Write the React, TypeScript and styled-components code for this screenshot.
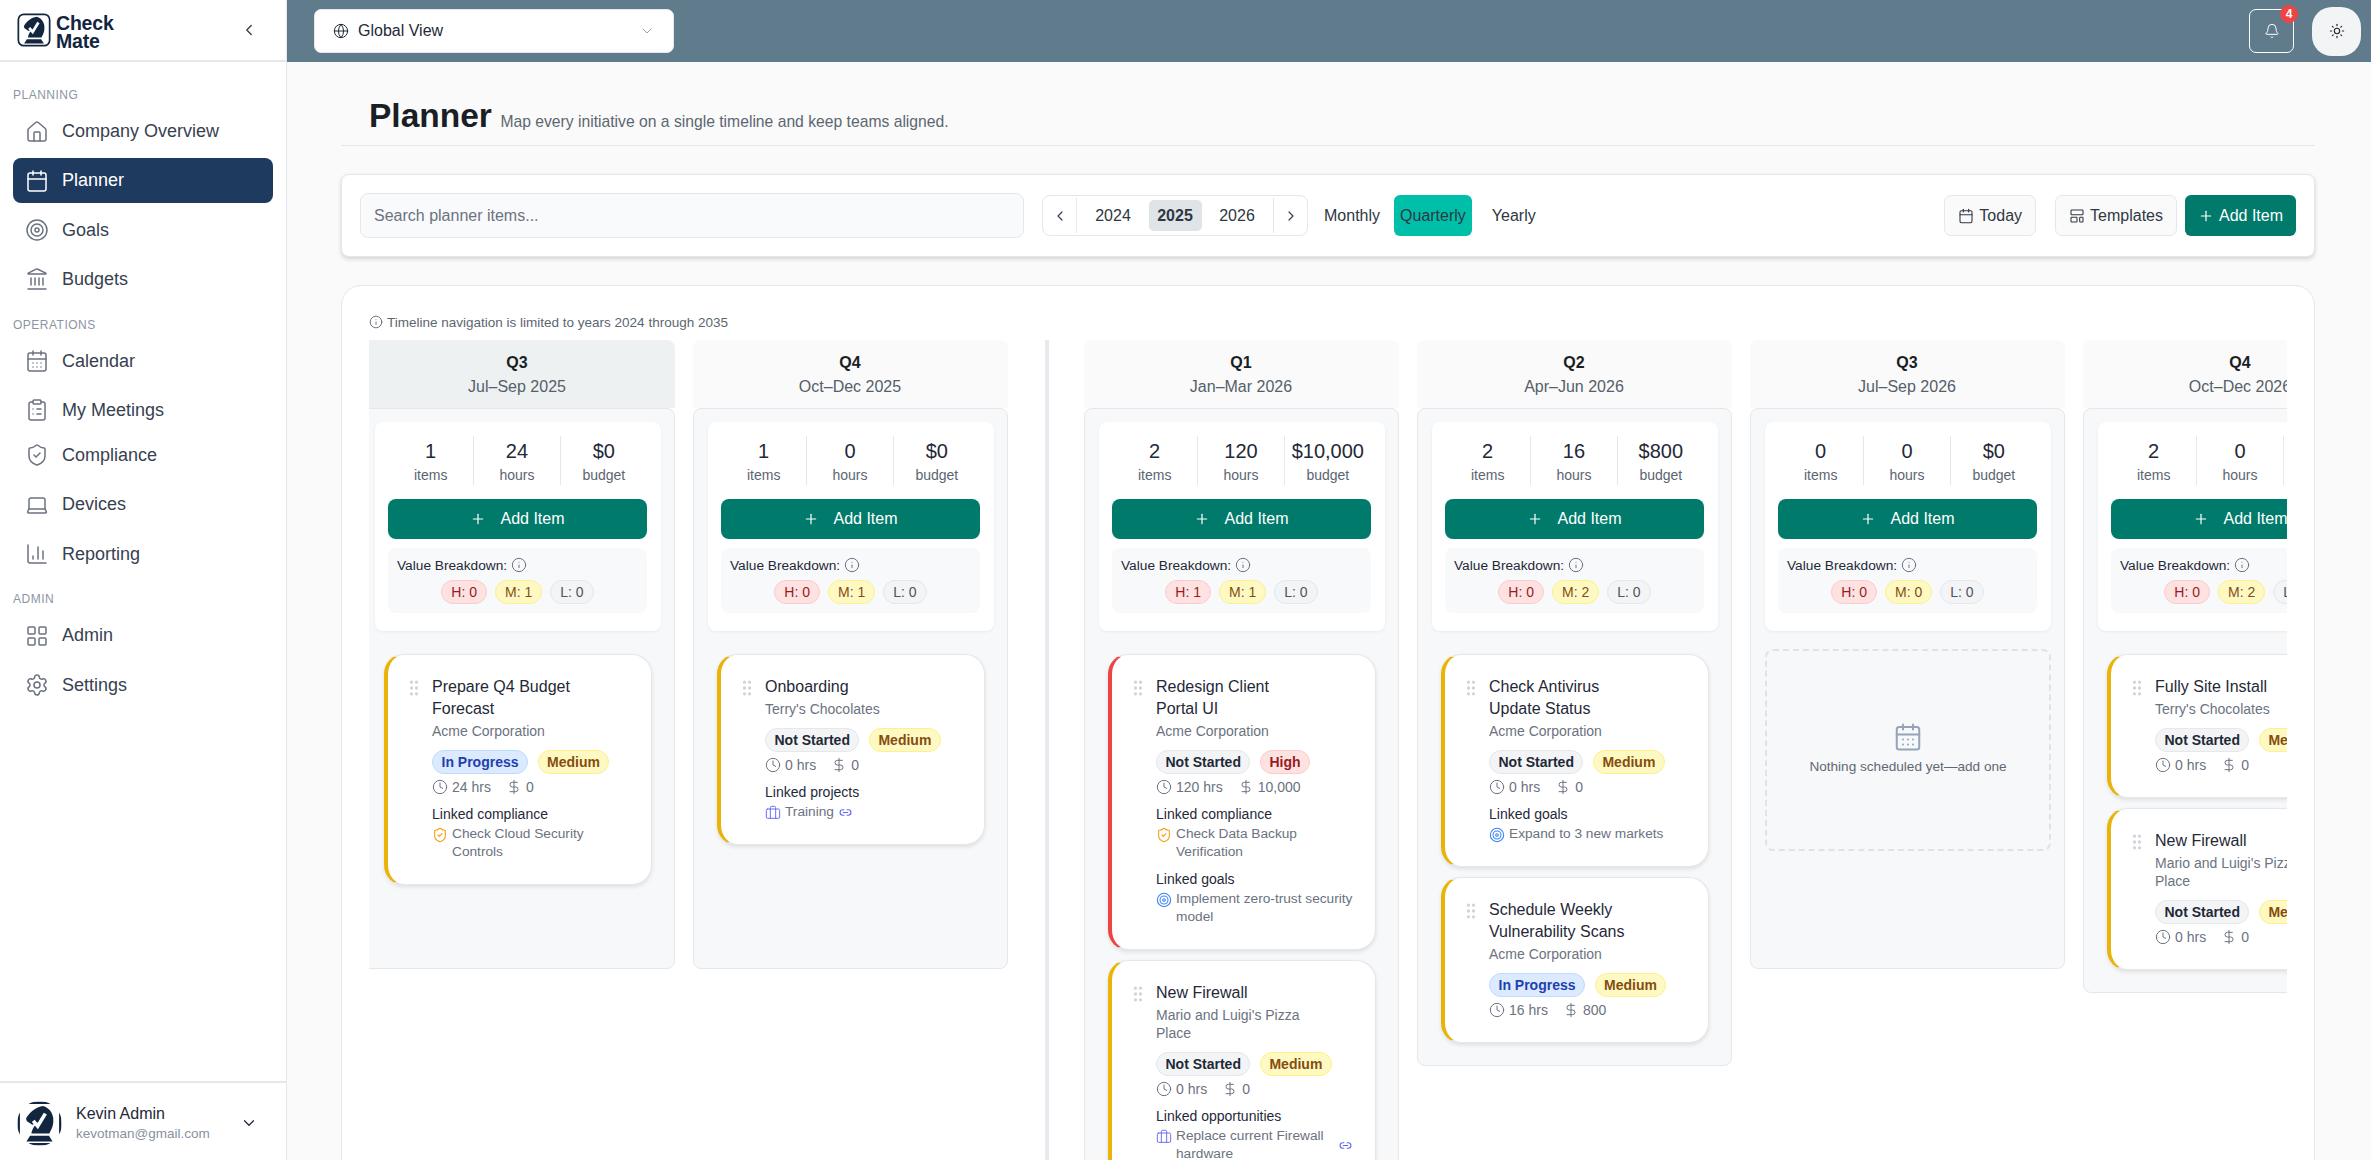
import React from 'react';
import styled, { createGlobalStyle } from 'styled-components';
import {
  House, Calendar, Target, Landmark, CalendarDays, ClipboardList, ShieldCheck, Laptop, ChartColumn,
  LayoutGrid, Settings, ChevronLeft, ChevronRight, ChevronDown, Globe, Bell, Sun, Info, Plus,
  LayoutTemplate, GripVertical, Clock, DollarSign, Link2, Briefcase,
} from 'lucide-react';

const Global = createGlobalStyle`
  html, body { margin: 0; padding: 0; height: 100%; overflow: hidden; background: #fafafa; }
  body, input, button { font-family: "Liberation Sans", Arial, sans-serif; }
  * { box-sizing: border-box; }
`;

const Shell = styled.div`display: flex; height: 100vh; overflow: hidden;`;
const Sidebar = styled.aside`flex: 0 0 287px; display: flex; flex-direction: column; background: #fff; border-right: 1px solid #e5e7eb;`;
const LogoBar = styled.div`height: 62px; flex: none; display: flex; align-items: center; justify-content: space-between; padding: 0 28px 0 17px; border-bottom: 2px solid #e5e7eb;`;
const LogoWrap = styled.div`display: flex; align-items: center; gap: 5px;`;
const LogoText = styled.div`font-size: 19.5px; line-height: 17.5px; font-weight: 700; color: #12263f; letter-spacing: -0.2px; padding-top: 5px;`;
const Nav = styled.nav`flex: 1; padding: 0 13px; display: flex; flex-direction: column; overflow: hidden;`;
const SectionLabel = styled.div<{ $first?: boolean }>`
  height: 16px; line-height: 16px; margin: ${(p) => (p.$first ? '25px' : '10.5px')} 0 6px; font-size: 12px;
  letter-spacing: 0.5px; color: #8b95a5; text-transform: uppercase;
`;
const NavItem = styled.a<{ $active?: boolean; $flush?: boolean }>`
  flex: none; height: 45px; display: flex; align-items: center; gap: 13px; padding: 0 12px; border-radius: 8px;
  margin-bottom: ${(p) => (p.$flush ? '0' : '4.3px')}; font-size: 18px; color: ${(p) => (p.$active ? '#fff' : '#374151')};
  background: ${(p) => (p.$active ? '#1f3a5f' : 'transparent')};
  svg { color: ${(p) => (p.$active ? '#fff' : '#6b7280')}; }
`;
const UserBar = styled.div`height: 79px; flex: none; border-top: 2px solid #e5e7eb; display: flex; align-items: center; padding: 3px 28px 0 17px;`;
const Avatar = styled.div`width: 45px; height: 45px; border-radius: 50%; overflow: hidden; flex: none;`;
const UserText = styled.div`margin-left: 14px; flex: 1;`;
const UserName = styled.div`font-size: 16px; line-height: 20px; color: #1f2937;`;
const UserMail = styled.div`font-size: 13.5px; line-height: 19px; color: #8891a0;`;

const Right = styled.div`flex: 1; min-width: 0; display: flex; flex-direction: column;`;
const Header = styled.header`height: 62px; flex: none; background: #607b8b; display: flex; align-items: center; padding: 0 10px 0 27px;`;
const Select = styled.div`width: 360px; height: 44px; background: #fff; border-radius: 7px; border: 1px solid #e5e7eb; display: flex; align-items: center; padding: 0 18px; font-size: 16px; color: #1f2937;
  span { margin-left: 9px; flex: 1; }
`;
const HeaderSpacer = styled.div`flex: 1;`;
const BellButton = styled.div`position: relative; width: 45px; height: 44px; border: 1px solid #fff; border-radius: 7px; display: flex; align-items: center; justify-content: center; color: #fff;`;
const Badge = styled.span`position: absolute; top: -5px; right: -5px; width: 18px; height: 18px; border-radius: 50%; background: #ef4444; color: #fff; font-size: 12px; font-weight: 700; display: flex; align-items: center; justify-content: center;`;
const ThemeButton = styled.div`margin-left: 18px; width: 49px; height: 49px; border-radius: 20px; background: #f3f4f6; color: #1f2937; display: flex; align-items: center; justify-content: center;`;

const Main = styled.main`flex: 1; min-height: 0; overflow: hidden; background: #fafafa; padding: 33px 56px 0 54px;`;
const TitleRow = styled.div`display: flex; align-items: baseline; gap: 8.5px; padding: 0 0 9px 28px; border-bottom: 1px solid #e5e7eb; height: 51px; margin-bottom: 28px;`;
const Title = styled.h1`margin: 0; font-size: 33.5px; line-height: 41px; font-weight: 700; color: #1a1f26;`;
const Subtitle = styled.span`font-size: 15.7px; color: #5d6670;`;

const Toolbar = styled.div`height: 83px; background: #fff; border: 1px solid #e5e7eb; border-radius: 8px; box-shadow: 0 2px 4px rgba(0,0,0,.16); display: flex; align-items: center; padding: 0 18px; margin-bottom: 28px;`;
const Search = styled.input`width: 664px; height: 45px; background: #f9fafb; border: 1px solid #e5e7eb; border-radius: 8px; padding: 0 13px; font-size: 16px; color: #1f2937; outline: none;
  &::placeholder { color: #6b7280; opacity: 1; }
`;
const YearGroup = styled.div`margin-left: 18px; width: 266px; height: 41px; border: 1px solid #e5e7eb; border-radius: 8px; display: flex; align-items: center; background: #fff;`;
const ArrowButton = styled.div<{ $side: 'left' | 'right' }>`
  flex: none; width: 34px; height: 35px; display: flex; align-items: center; justify-content: center; color: #374151;
  border-${(p) => (p.$side === 'left' ? 'right' : 'left')}: 1px solid #e5e7eb;
`;
const Years = styled.div`flex: 1; display: flex; justify-content: center; gap: 9px;`;
const Year = styled.div<{ $active?: boolean }>`
  width: 53px; height: 31px; display: flex; align-items: center; justify-content: center; border-radius: 5px; font-size: 16px; color: #2f3742;
  font-weight: ${(p) => (p.$active ? 700 : 400)}; background: ${(p) => (p.$active ? '#dfe4e7' : 'transparent')};
`;
const Toggle = styled.div`margin-left: 10px; display: flex; gap: 8px; align-items: center;`;
const ToggleButton = styled.div<{ $active?: boolean }>`
  height: 41px; padding: 0 6px; display: flex; align-items: center; border-radius: 6px; font-size: 16px; color: #2f3742;
  background: ${(p) => (p.$active ? '#00bfa9' : 'transparent')};
  &:last-child { margin-left: 6px; }
`;
const ToolSpacer = styled.div`flex: 1;`;
const GhostButton = styled.div<{ $gap?: number }>`
  height: 41px; padding: 0 13px; display: flex; align-items: center; gap: 5px; border: 1px solid #e5e7eb; border-radius: 7px; background: #fafafa; font-size: 16px; color: #2f3742;
  margin-right: ${(p) => p.$gap ?? 0}px;
`;
const PrimaryButton = styled.div`height: 41px; padding: 0 13px; display: flex; align-items: center; gap: 5px; border-radius: 6px; background: #007a6b; color: #fff; font-size: 16px;`;

const TimelineCard = styled.section`height: 1000px; background: #fff; border: 1px solid #e5e7eb; border-radius: 20px; padding: 27px 27px 0;`;
const Note = styled.div`height: 18px; display: flex; align-items: center; gap: 4px; font-size: 13.5px; color: #5c6670; margin-bottom: 9px;`;
const Scroller = styled.div`overflow: hidden; height: 900px;`;
const Track = styled.div`display: flex; align-items: flex-start; gap: 18px; margin-left: -9px; width: max-content; min-height: 900px;`;
const YearDivider = styled.div`align-self: stretch; flex: 0 0 4px; background: #e8e8ee; margin: 0 17px 0 19px;`;
const Column = styled.div`flex: 0 0 315px;`;
const ColumnHead = styled.div<{ $current?: boolean }>`
  height: 68px; border-radius: 8px 8px 0 0; background: ${(p) => (p.$current ? '#eef1f2' : '#fafafa')}; text-align: center; padding: 13px 1px 0 0;
`;
const Quarter = styled.div`font-size: 16px; line-height: 20px; font-weight: 700; color: #1a1f26;`;
const Dates = styled.div`margin-top: 4px; font-size: 16px; line-height: 20px; color: #555f6a;`;
const ColumnBody = styled.div`min-height: 561px; background: #f7f8fa; border: 1px solid #e5e7eb; border-radius: 8px; padding: 13px 13px 22px 14px;`;
const Summary = styled.div`background: #fff; border-radius: 8px; box-shadow: 0 1px 3px rgba(0,0,0,.06); padding: 14px 14px 18px 13px; margin-bottom: 23px;`;
const Stats = styled.div`display: grid; grid-template-columns: repeat(3, 1fr); height: 49px; margin-bottom: 14px;`;
const Stat = styled.div`text-align: center; border-right: 1px solid #e5e7eb; &:last-child { border-right: 0; }`;
const StatValue = styled.div`font-size: 20px; line-height: 30px; color: #1f2937; white-space: nowrap;`;
const StatLabel = styled.div`font-size: 14px; line-height: 19px; color: #5b6570;`;
const AddWide = styled.div`height: 40px; border-radius: 8px; background: #007a6b; color: #fff; font-size: 16px; display: flex; align-items: center; justify-content: center; gap: 14px;`;
const ValueBox = styled.div`margin-top: 9px; height: 65px; border-radius: 8px; background: #f8f9fb; padding: 9px;`;
const ValueTitle = styled.div`height: 16px; display: flex; align-items: center; gap: 4px; font-size: 13.7px; color: #1f2937; svg { color: #6b7280; }`;
const ValuePills = styled.div`margin-top: 7px; display: flex; justify-content: center; gap: 8px;`;

const pill = {
  high: 'background:#fee2e2;border-color:#fecaca;color:#991b1b;',
  med: 'background:#fef9c3;border-color:#fef08a;color:#854d0e;',
  low: 'background:#f3f4f6;border-color:#e5e7eb;color:#4b5563;',
  prog: 'background:#dbeafe;border-color:#bfdbfe;color:#1e40af;',
  none: 'background:#f3f4f6;border-color:#e5e7eb;color:#1f2937;',
};
type Tone = keyof typeof pill;
const CountPill = styled.span<{ $tone: Tone }>`
  height: 24px; padding: 0 9px; border: 1px solid; border-radius: 12px; font-size: 14px; line-height: 22px; ${(p) => pill[p.$tone]}
`;

const ItemCard = styled.article<{ $accent: string }>`
  width: 268px; margin: 0 0 10px 9px; display: flex; gap: 8px; background: #fff; border: 1px solid #e5e7eb; border-left: 4px solid ${(p) => p.$accent};
  border-radius: 20px; box-shadow: 0 2px 4px rgba(0,0,0,.1); padding: 21px 15px 23px 16px;
  &:last-child { margin-bottom: 0; }
`;
const Grip = styled.div`flex: none; width: 20px; height: 20px; margin-top: 2px; color: #d1d5db;`;
const ItemContent = styled.div`flex: none; width: 202px;`;
const ItemTitle = styled.div`max-width: 150px; font-size: 16px; line-height: 22px; color: #1f2937;`;
const ItemClient = styled.div`max-width: 150px; margin-top: 2px; font-size: 14px; line-height: 18px; color: #6b7280;`;
const Pills = styled.div`margin-top: 10px; display: flex; gap: 9.5px; white-space: nowrap;`;
const StatusPill = styled.span<{ $tone: Tone }>`
  height: 24px; padding: 0 8.5px; border: 1px solid; border-radius: 12px; font-size: 14px; line-height: 22px; font-weight: 700; ${(p) => pill[p.$tone]}
`;
const Meta = styled.div`margin-top: 4px; height: 18px; display: flex; align-items: center; gap: 4px; font-size: 14px; color: #6b7280; white-space: nowrap;
  svg:nth-of-type(2) { margin-left: 11px; }
`;
const LinkHead = styled.div`margin-top: 9px; font-size: 14px; line-height: 18px; color: #1f2937;`;
const LinkRow = styled.div`margin-top: 2px; display: flex; align-items: flex-start; gap: 4px; font-size: 13.7px; line-height: 18px; color: #6b7280;
  > svg:first-child { flex: none; margin-top: 2px; }
`;
const LinkText = styled.span`flex: 0 1 auto;`;
const LinkEnd = styled.span`flex: none; align-self: center; margin: 0 6px 0 1px; display: flex; color: #6366f1;`;
const Empty = styled.div`margin: -5px 0 0; height: 202px; border: 2px dashed #dfe3e8; border-radius: 8px; display: flex; flex-direction: column; align-items: center; justify-content: center; color: #94a3b8; gap: 6px; padding-bottom: 2px;`;
const EmptyText = styled.div`font-size: 13.6px; line-height: 18px; color: #5f6872;`;

const LogoMark = ({ size = 34 }: { size?: number }) => (
  <svg width={size} height={size} viewBox="0 0 100 100" fill="none" aria-hidden>
    <rect x="4" y="4" width="92" height="92" rx="16" stroke="#12263f" strokeWidth="5" fill="#fff" />
    <path d="M58 11C74 15 84 32 80 52 78 62 74 67 72 72H32C34 60 40 54 46 47L34 53 22 45 20 39C28 25 42 13 58 11Z" fill="#12263f" />
    <path d="M29 77H71L79 90H21Z" fill="#12263f" />
    <path d="M36 44 46 56 63 28" stroke="#fff" strokeWidth="8" fill="none" />
  </svg>
);

type Link = { icon: 'shield' | 'target' | 'case'; text: string; chain?: boolean };
type Item = {
  title: string; client: string; accent: string; status: 'Not Started' | 'In Progress'; priority: 'Medium' | 'High';
  hrs: number; cost: string; sections?: { head: string; links: Link[] }[];
};
type Col = {
  q: string; dates: string; current?: boolean; items: string; hours: string; budget: string; h: number; m: number; l: number;
  cards?: Item[]; empty?: boolean;
};
const YEL = '#eab308';
const RED = '#ef4444';
const firewall = (): Item => ({ title: 'New Firewall', client: "Mario and Luigi's Pizza Place", accent: YEL, status: 'Not Started', priority: 'Medium', hrs: 0, cost: '0' });

const before: Col[] = [
  { q: 'Q3', dates: 'Jul–Sep 2025', current: true, items: '1', hours: '24', budget: '$0', h: 0, m: 1, l: 0, cards: [
    { title: 'Prepare Q4 Budget Forecast', client: 'Acme Corporation', accent: YEL, status: 'In Progress', priority: 'Medium', hrs: 24, cost: '0',
      sections: [{ head: 'Linked compliance', links: [{ icon: 'shield', text: 'Check Cloud Security Controls' }] }] },
  ] },
  { q: 'Q4', dates: 'Oct–Dec 2025', items: '1', hours: '0', budget: '$0', h: 0, m: 1, l: 0, cards: [
    { title: 'Onboarding', client: "Terry's Chocolates", accent: YEL, status: 'Not Started', priority: 'Medium', hrs: 0, cost: '0',
      sections: [{ head: 'Linked projects', links: [{ icon: 'case', text: 'Training', chain: true }] }] },
  ] },
];
const after: Col[] = [
  { q: 'Q1', dates: 'Jan–Mar 2026', items: '2', hours: '120', budget: '$10,000', h: 1, m: 1, l: 0, cards: [
    { title: 'Redesign Client Portal UI', client: 'Acme Corporation', accent: RED, status: 'Not Started', priority: 'High', hrs: 120, cost: '10,000',
      sections: [
        { head: 'Linked compliance', links: [{ icon: 'shield', text: 'Check Data Backup Verification' }] },
        { head: 'Linked goals', links: [{ icon: 'target', text: 'Implement zero-trust security model' }] },
      ] },
    { ...firewall(), sections: [{ head: 'Linked opportunities', links: [{ icon: 'case', text: 'Replace current Firewall hardware', chain: true }] }] },
  ] },
  { q: 'Q2', dates: 'Apr–Jun 2026', items: '2', hours: '16', budget: '$800', h: 0, m: 2, l: 0, cards: [
    { title: 'Check Antivirus Update Status', client: 'Acme Corporation', accent: YEL, status: 'Not Started', priority: 'Medium', hrs: 0, cost: '0',
      sections: [{ head: 'Linked goals', links: [{ icon: 'target', text: 'Expand to 3 new markets' }] }] },
    { title: 'Schedule Weekly Vulnerability Scans', client: 'Acme Corporation', accent: YEL, status: 'In Progress', priority: 'Medium', hrs: 16, cost: '800' },
  ] },
  { q: 'Q3', dates: 'Jul–Sep 2026', items: '0', hours: '0', budget: '$0', h: 0, m: 0, l: 0, empty: true },
  { q: 'Q4', dates: 'Oct–Dec 2026', items: '2', hours: '0', budget: '$0', h: 0, m: 2, l: 0, cards: [
    { title: 'Fully Site Install', client: "Terry's Chocolates", accent: YEL, status: 'Not Started', priority: 'Medium', hrs: 0, cost: '0' },
    firewall(),
  ] },
];

const LinkIcon = ({ kind }: { kind: Link['icon'] }) => {
  if (kind === 'shield') return <ShieldCheck size={16} color="#f59e0b" strokeWidth={1.6} />;
  if (kind === 'target') return <Target size={16} color="#3b82f6" strokeWidth={1.6} />;
  return <Briefcase size={16} color="#6366f1" strokeWidth={1.4} />;
};

const Card = ({ item }: { item: Item }) => (
  <ItemCard $accent={item.accent}>
    <Grip><GripVertical size={20} strokeWidth={2} /></Grip>
    <ItemContent>
      <ItemTitle>{item.title}</ItemTitle>
      <ItemClient>{item.client}</ItemClient>
      <Pills>
        <StatusPill $tone={item.status === 'In Progress' ? 'prog' : 'none'}>{item.status}</StatusPill>
        <StatusPill $tone={item.priority === 'High' ? 'high' : 'med'}>{item.priority}</StatusPill>
      </Pills>
      <Meta>
        <Clock size={16} strokeWidth={1.5} />
        <span>{item.hrs} hrs</span>
        <DollarSign size={16} strokeWidth={1.5} />
        <span>{item.cost}</span>
      </Meta>
      {item.sections?.map((s) => (
        <React.Fragment key={s.head}>
          <LinkHead>{s.head}</LinkHead>
          {s.links.map((l) => (
            <LinkRow key={l.text}>
              <LinkIcon kind={l.icon} />
              <LinkText>{l.text}</LinkText>
              {l.chain && <LinkEnd><Link2 size={13} strokeWidth={2} /></LinkEnd>}
            </LinkRow>
          ))}
        </React.Fragment>
      ))}
    </ItemContent>
  </ItemCard>
);

const QuarterColumn = ({ col }: { col: Col }) => (
  <Column>
    <ColumnHead $current={col.current}>
      <Quarter>{col.q}</Quarter>
      <Dates>{col.dates}</Dates>
    </ColumnHead>
    <ColumnBody>
      <Summary>
        <Stats>
          <Stat><StatValue>{col.items}</StatValue><StatLabel>items</StatLabel></Stat>
          <Stat><StatValue>{col.hours}</StatValue><StatLabel>hours</StatLabel></Stat>
          <Stat><StatValue>{col.budget}</StatValue><StatLabel>budget</StatLabel></Stat>
        </Stats>
        <AddWide><Plus size={16} strokeWidth={1.8} />Add Item</AddWide>
        <ValueBox>
          <ValueTitle>Value Breakdown:<Info size={16} strokeWidth={1.5} /></ValueTitle>
          <ValuePills>
            <CountPill $tone="high">H: {col.h}</CountPill>
            <CountPill $tone="med">M: {col.m}</CountPill>
            <CountPill $tone="low">L: {col.l}</CountPill>
          </ValuePills>
        </ValueBox>
      </Summary>
      {col.empty ? (
        <Empty>
          <CalendarDays size={30} strokeWidth={1.6} />
          <EmptyText>Nothing scheduled yet—add one</EmptyText>
        </Empty>
      ) : (
        col.cards?.map((c) => <Card key={c.title} item={c} />)
      )}
    </ColumnBody>
  </Column>
);

export default function App() {
  return (
    <Shell>
      <Global />
      <Sidebar>
        <LogoBar>
          <LogoWrap>
            <LogoMark />
            <LogoText>Check<br />Mate</LogoText>
          </LogoWrap>
          <ChevronLeft size={18} color="#374151" strokeWidth={1.8} />
        </LogoBar>
        <Nav>
          <SectionLabel $first>Planning</SectionLabel>
          <NavItem><House size={24} strokeWidth={1.5} />Company Overview</NavItem>
          <NavItem $active><Calendar size={24} strokeWidth={1.5} />Planner</NavItem>
          <NavItem><Target size={24} strokeWidth={1.5} />Goals</NavItem>
          <NavItem><Landmark size={24} strokeWidth={1.5} />Budgets</NavItem>
          <SectionLabel>Operations</SectionLabel>
          <NavItem><CalendarDays size={24} strokeWidth={1.5} />Calendar</NavItem>
          <NavItem $flush><ClipboardList size={24} strokeWidth={1.5} />My Meetings</NavItem>
          <NavItem><ShieldCheck size={24} strokeWidth={1.5} />Compliance</NavItem>
          <NavItem><Laptop size={24} strokeWidth={1.5} />Devices</NavItem>
          <NavItem><ChartColumn size={24} strokeWidth={1.5} />Reporting</NavItem>
          <SectionLabel>Admin</SectionLabel>
          <NavItem><LayoutGrid size={24} strokeWidth={1.5} />Admin</NavItem>
          <NavItem><Settings size={24} strokeWidth={1.5} />Settings</NavItem>
        </Nav>
        <UserBar>
          <Avatar><LogoMark size={45} /></Avatar>
          <UserText>
            <UserName>Kevin Admin</UserName>
            <UserMail>kevotman@gmail.com</UserMail>
          </UserText>
          <ChevronDown size={18} color="#1f2937" strokeWidth={1.6} />
        </UserBar>
      </Sidebar>
      <Right>
        <Header>
          <Select>
            <Globe size={16} strokeWidth={1.5} />
            <span>Global View</span>
            <ChevronDown size={16} color="#9ca3af" strokeWidth={1.5} />
          </Select>
          <HeaderSpacer />
          <BellButton>
            <Bell size={16} strokeWidth={1.5} />
            <Badge>4</Badge>
          </BellButton>
          <ThemeButton><Sun size={16} strokeWidth={1.6} /></ThemeButton>
        </Header>
        <Main>
          <TitleRow>
            <Title>Planner</Title>
            <Subtitle>Map every initiative on a single timeline and keep teams aligned.</Subtitle>
          </TitleRow>
          <Toolbar>
            <Search placeholder="Search planner items..." readOnly />
            <YearGroup>
              <ArrowButton $side="left"><ChevronLeft size={16} strokeWidth={1.8} /></ArrowButton>
              <Years>
                <Year>2024</Year>
                <Year $active>2025</Year>
                <Year>2026</Year>
              </Years>
              <ArrowButton $side="right"><ChevronRight size={16} strokeWidth={1.8} /></ArrowButton>
            </YearGroup>
            <Toggle>
              <ToggleButton>Monthly</ToggleButton>
              <ToggleButton $active>Quarterly</ToggleButton>
              <ToggleButton>Yearly</ToggleButton>
            </Toggle>
            <ToolSpacer />
            <GhostButton $gap={19}><Calendar size={16} strokeWidth={1.6} />Today</GhostButton>
            <GhostButton $gap={8}><LayoutTemplate size={16} strokeWidth={1.6} />Templates</GhostButton>
            <PrimaryButton><Plus size={16} strokeWidth={1.8} />Add Item</PrimaryButton>
          </Toolbar>
          <TimelineCard>
            <Note><Info size={14} strokeWidth={1.5} />Timeline navigation is limited to years 2024 through 2035</Note>
            <Scroller>
              <Track>
                {before.map((c) => <QuarterColumn key={c.dates} col={c} />)}
                <YearDivider />
                {after.map((c) => <QuarterColumn key={c.dates} col={c} />)}
              </Track>
            </Scroller>
          </TimelineCard>
        </Main>
      </Right>
    </Shell>
  );
}
